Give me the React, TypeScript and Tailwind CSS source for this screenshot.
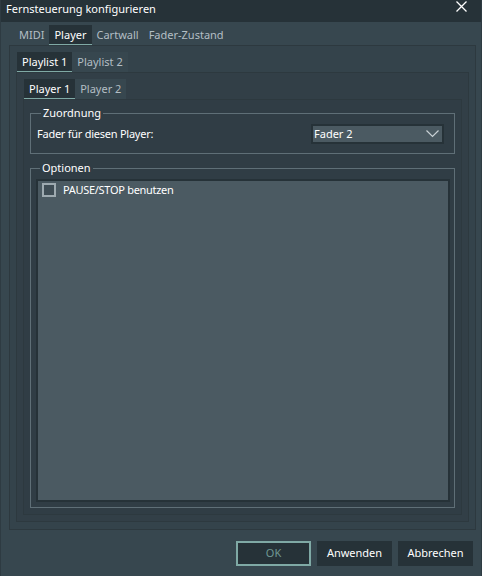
import { useState } from 'react';

const font = { fontFamily: '"Noto Sans", "Segoe UI", sans-serif' };

type TabProps = { label: string; active?: boolean; shaded?: boolean };

const Tab = ({ label, active, shaded }: TabProps) => (
  <div
    className={`h-[20px] px-[5px] flex items-center text-[11px] leading-none border-b ${
      active
        ? 'bg-[#263238] text-white border-[#7fa9a5]'
        : shaded
        ? 'bg-[#37474f] text-[#b3bec4] border-transparent'
        : 'text-[#b3bec4] border-transparent'
    }`}
  >
    {label}
  </div>
);

const Chevron = () => (
  <svg width="13" height="8" viewBox="0 0 13 8" fill="none">
    <path d="M0.5 0.5 L6.5 6.5 L12.5 0.5" stroke="#c9d1d5" strokeWidth="1.2" />
  </svg>
);

export default function App() {
  const [pauseStop, setPauseStop] = useState(false);

  return (
    <div style={font} className="w-[482px] h-[576px] bg-[#37474f] flex flex-col border-x border-[#2e3b42]">
      {/* Title bar */}
      <div className="h-[22px] shrink-0 bg-[#263238] flex items-start justify-between pl-[5px] pr-[14px] text-white">
        <span className="text-[11px] leading-[16px] pt-[1px]">Fernsteuerung konfigurieren</span>
        <svg width="11" height="11" viewBox="0 0 11 11" className="mt-[1px]">
          <path d="M0.5 0.5 L10.5 10.5 M10.5 0.5 L0.5 10.5" stroke="#fff" strokeWidth="1.3" />
        </svg>
      </div>

      <div className="flex-1 min-h-0 flex flex-col pt-[3px] pl-[8px] pr-[5px] pb-[10px]">
        {/* Main tabs */}
        <div className="flex shrink-0 pl-[5px]">
          <Tab label="MIDI" />
          <Tab label="Player" active />
          <Tab label="Cartwall" />
          <Tab label="Fader-Zustand" />
        </div>

        <div className="flex-1 min-h-0 flex flex-col border border-[#2d393f] bg-[#34434b] pt-[6px] px-[6px] pb-[7px]">
          {/* Playlist tabs */}
          <div className="flex shrink-0 pl-[1px]">
            <Tab label="Playlist 1" active />
            <Tab label="Playlist 2" shaded />
          </div>

          <div className="flex-1 min-h-0 flex flex-col border border-[#2d393f] bg-[#323f47] pt-[6px] px-[6px] pb-[6px]">
            {/* Player tabs */}
            <div className="flex shrink-0 pl-[1px]">
              <Tab label="Player 1" active />
              <Tab label="Player 2" shaded />
            </div>

            <div className="flex-1 min-h-0 flex flex-col gap-[7px] border border-[#2d393f] bg-[#303d45] pt-[6px] px-[6px] pb-[6px]">
              <fieldset className="shrink-0 border border-[#5f6f77] pt-[4px] pl-[6px] pr-[10px] pb-[9px] min-w-0">
                <legend className="ml-[4px] px-[2px] text-[11px] leading-[14px] text-white">Zuordnung</legend>
                <div className="flex items-center justify-between">
                  <span className="text-[11px] tracking-[-0.25px] text-white">Fader für diesen Player:</span>
                  <div className="w-[133px] h-[20px] border-2 border-[#263238] bg-[#4b5a62] flex items-center justify-between pl-[1px] pr-[3px]">
                    <span className="text-[11px] text-white">Fader 2</span>
                    <Chevron />
                  </div>
                </div>
              </fieldset>

              <fieldset className="flex-1 min-h-0 flex flex-col border border-[#5f6f77] pt-[4px] pl-[5px] pr-[4px] pb-[5px] min-w-0">
                <legend className="ml-[4px] px-[2px] text-[11px] leading-[14px] text-white">Optionen</legend>
                <div className="flex-1 border-2 border-[#263238] bg-[#4b5a62] pt-[1px] pl-[4px]">
                  <label className="flex items-center gap-[7px] cursor-pointer">
                    <span
                      onClick={() => setPauseStop(!pauseStop)}
                      className="w-[14px] h-[14px] border-2 border-[#9eaab0] bg-[#3f4d55] flex items-center justify-center"
                    >
                      {pauseStop && <span className="w-[6px] h-[6px] bg-[#9eaab0]" />}
                    </span>
                    <span className="text-[11px] tracking-[-0.3px] text-white">PAUSE/STOP benutzen</span>
                  </label>
                </div>
              </fieldset>
            </div>
          </div>
        </div>

        {/* Buttons */}
        <div className="flex shrink-0 justify-end gap-[6px] pt-[11px] pr-[3px]">
          <button className="w-[75px] h-[25px] border-2 border-[#7fa9a5] bg-[#263238] text-[11px] text-[#6f9893]">OK</button>
          <button className="w-[75px] h-[25px] bg-[#263238] text-[11px] text-white">Anwenden</button>
          <button className="w-[75px] h-[25px] bg-[#263238] text-[11px] text-white">Abbrechen</button>
        </div>
      </div>
    </div>
  );
}
